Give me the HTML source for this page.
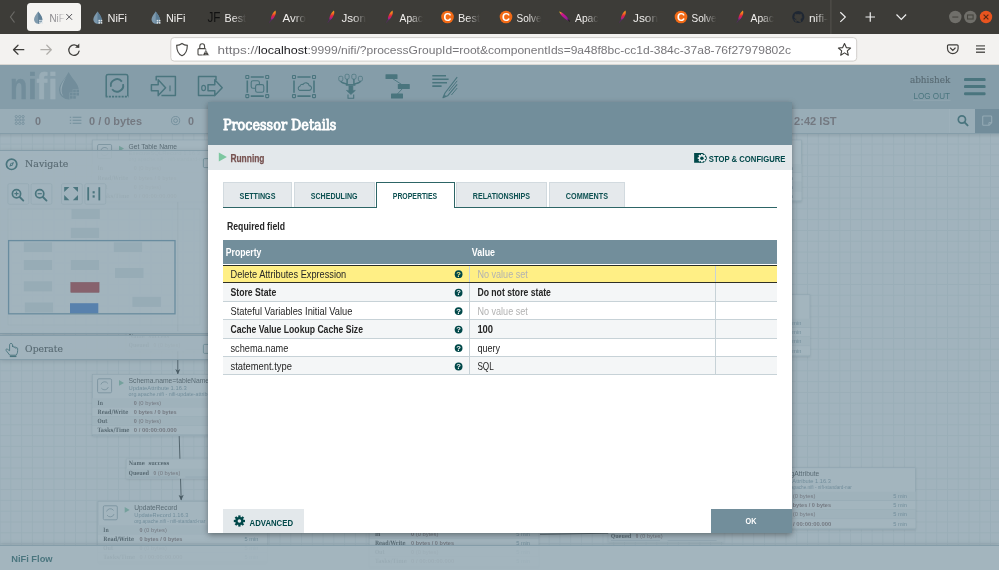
<!DOCTYPE html>
<html lang="en"><head><meta charset="utf-8"><title>NiFi Flow</title>
<style>
*{box-sizing:border-box;margin:0;padding:0}
html,body{width:999px;height:570px;overflow:hidden;background:#a5b7c0;font-family:"Liberation Sans",sans-serif}
#root{position:relative;width:999px;height:570px;overflow:hidden}
svg{position:absolute;left:0;top:0;overflow:visible;will-change:transform}
svg text{font-family:"Liberation Sans",sans-serif;white-space:pre}
svg text.slab{font-family:"DejaVu Serif Condensed","DejaVu Serif","Liberation Serif",serif}
/* Firefox chrome */
#tabbar{position:absolute;left:0;top:0;width:999px;height:34px;background:#3d3c38}
#activetab{position:absolute;left:27px;top:3px;width:54.4px;height:27.6px;border-radius:3.5px;background:#f4f3f1}
#toolbar{position:absolute;left:0;top:34px;width:999px;height:31px;background:#f3f2f0;border-bottom:1px solid #d8d6d2}
#urlbar{position:absolute;left:171px;top:4px;width:685px;height:23px;border-radius:3px;background:#fff}
/* NiFi */
#nifi{position:absolute;left:0;top:0;width:999px;height:570px;overflow:hidden;background:#f9fafb}
#glass{position:absolute;left:0;top:65px;width:999px;height:505px;background:#728e9b;opacity:.65;z-index:5}
#header{position:absolute;left:0;top:65px;width:999px;height:45px;background:#aabbc3}
#flow-status{position:absolute;left:0;top:108.6px;width:999px;height:25.4px;background:#e3e8eb;border-bottom:.8px solid #aabbc3;z-index:2}
#flow-status:after{content:"";position:absolute;left:0;top:25.4px;width:999px;height:4px;background:linear-gradient(rgba(0,0,0,.16),rgba(0,0,0,0))}
#search-btn{position:absolute;left:949.4px;top:0;width:25.4px;height:24.4px;border-left:1.2px solid #eef1f3;background:#e3e8eb}
#bulletin-btn{position:absolute;left:974.8px;top:0;width:24.2px;height:24.4px;background:#728e9b}
#canvas{position:absolute;left:0;top:120px;width:999px;height:427px;background-color:#f9fafb;
 background-image:linear-gradient(to right,#e5ebed .8px,transparent .8px),linear-gradient(to bottom,#e5ebed .8px,transparent .8px);
 background-size:10.77px 10.8px;background-position:-.4px 2px}
.panel{position:absolute;left:0;width:230px;background:rgba(249,250,251,.9);border:.8px solid #aabbc3;border-left:0;box-shadow:0 1px 5px rgba(0,0,0,.25);z-index:3}
#navigate{top:150px;height:183.6px}
#operate{top:335.3px;height:25.2px}
#footer{position:absolute;left:0;top:545.2px;width:999px;height:24.8px;background:rgba(255,255,255,.88);border-top:.8px solid #aabbc3;box-shadow:0 -1px 5px rgba(0,0,0,.2);z-index:3}
#canvas-svg{z-index:1}
#ui-svg{z-index:4}
#chrome-svg,#tabbar,#toolbar{z-index:9}
#dialog{position:absolute;left:208px;top:102.3px;width:584px;height:430.4px;background:#fff;box-shadow:0 2px 6px rgba(0,0,0,.38);z-index:6}
#dlg-svg{z-index:7}
#dlg-header{position:absolute;left:0;top:0;width:584px;height:44px;background:#728e9b}
#dlg-status{position:absolute;left:0;top:43px;width:584px;height:24.6px;background:#e3e8eb}
#tabline{position:absolute;left:15.1px;top:104.6px;width:553.6px;height:1px;background:#2d6566}
.tab{position:absolute;top:79.9px;height:24.8px;background:#e5e9ec;border:.8px solid #d2dadf;border-bottom:0}
.tab.sel{background:#fff;border:1px solid #2d6566;border-bottom:0;height:26px}
#thead{position:absolute;left:15.1px;top:137.6px;width:553.6px;height:24.6px;background:#728e9b}
.row{position:absolute;left:15.1px;width:553.6px;height:18.46px;background:#fff;border-bottom:.9px solid #c7d2d7}
.row.odd{background:#f4f6f7}
.row.selrow{background:#ffef85;border-top:1px solid #2a2d25;border-bottom:.9px solid #2f3026}
.row i{position:absolute;top:0;height:100%;width:.9px;background:#c7d2d7}
.row .c1{left:246px}.row .c2{left:492.2px}
#btn-adv{position:absolute;left:15.3px;top:406.3px;width:81px;height:24.1px;background:#e3e8eb}
#btn-ok{position:absolute;left:503px;top:406.5px;width:81px;height:23.9px;background:#728e9b}

</style></head>
<body>
<div id="root">
<div id="tabbar"><div id="activetab"></div></div>
<div id="toolbar"><div id="urlbar"></div></div>
<svg id="chrome-svg" width="999" height="65" viewBox="0 0 999 65">
<rect x="170.8" y="37.6" width="685.9" height="23.5" rx="3.4" fill="#fff" stroke="#cdcbc7" stroke-width=".9"/>
<path d="M14.5 11.5 L10.5 17 L14.5 22.5" fill="none" stroke="#6b6a66" stroke-width="1.2"/>
<defs><linearGradient id="nf" gradientUnits="userSpaceOnUse" x1="49" y1="0" x2="65" y2="0"><stop offset="0" stop-color="#7c7b7f"/><stop offset=".5" stop-color="#9d9ca0"/><stop offset="1" stop-color="#e8e7e6"/></linearGradient><linearGradient id="fg" x1="0" y1="0" x2="0" y2="1"><stop offset="0" stop-color="#fbb01c"/><stop offset=".28" stop-color="#f2781f"/><stop offset=".55" stop-color="#e2243c"/><stop offset=".85" stop-color="#a6219a"/><stop offset="1" stop-color="#6a2a86"/></linearGradient><linearGradient id="fg2" x1="0" y1="0" x2="1" y2="1"><stop offset="0" stop-color="#f5e000"/><stop offset=".3" stop-color="#d4148c"/><stop offset="1" stop-color="#7a1fa0"/></linearGradient></defs>
<g transform="translate(38.2,17.4) scale(0.95)"><path d="M0 -6.2 C 2.4 -2.6 4.4 -0.4 4.4 2.2 A4.4 4.4 0 0 1 -4.4 2.2 C -4.4 -0.4 -2.4 -2.6 0 -6.2Z" fill="#7f9aad"/><path d="M0 -6.2 C 2.4 -2.6 4.4 -0.4 4.4 2.2 A4.4 4.4 0 0 1 0 6.6Z" fill="#5f7f96"/><rect x="0.6" y="2.2" width="4.6" height="4.6" fill="#f4f3f1" opacity=".0"/><rect x="1.0" y="2.6" width="1.7" height="1.7" fill="#dfe6ea"/><rect x="3.3" y="2.6" width="1.7" height="1.7" fill="#dfe6ea"/><rect x="1.0" y="4.9" width="1.7" height="1.7" fill="#dfe6ea"/><rect x="3.3" y="4.9" width="1.7" height="1.7" fill="#dfe6ea"/></g>
<text x="49.40" y="21.50" font-size="11" fill="url(#nf)" textLength="15.40" lengthAdjust="spacingAndGlyphs">NiF</text>
<path d="M66.3 14 L72.1 19.8 M72.1 14 L66.3 19.8" stroke="#55555a" stroke-width="1" fill="none"/>
<g transform="translate(97.5,17.4) scale(0.95)"><path d="M0 -6.2 C 2.4 -2.6 4.4 -0.4 4.4 2.2 A4.4 4.4 0 0 1 -4.4 2.2 C -4.4 -0.4 -2.4 -2.6 0 -6.2Z" fill="#7d99ad"/><path d="M0 -6.2 C 2.4 -2.6 4.4 -0.4 4.4 2.2 A4.4 4.4 0 0 1 0 6.6Z" fill="#5c7d95"/><rect x="0.6" y="2.2" width="4.6" height="4.6" fill="#f4f3f1" opacity=".0"/><rect x="1.0" y="2.6" width="1.7" height="1.7" fill="#dfe6ea"/><rect x="3.3" y="2.6" width="1.7" height="1.7" fill="#dfe6ea"/><rect x="1.0" y="4.9" width="1.7" height="1.7" fill="#dfe6ea"/><rect x="3.3" y="4.9" width="1.7" height="1.7" fill="#dfe6ea"/></g>
<text x="107.50" y="21.60" font-size="11" fill="#f1efed" textLength="19.50" lengthAdjust="spacingAndGlyphs">NiFi</text>
<g transform="translate(155.7,17.4) scale(0.95)"><path d="M0 -6.2 C 2.4 -2.6 4.4 -0.4 4.4 2.2 A4.4 4.4 0 0 1 -4.4 2.2 C -4.4 -0.4 -2.4 -2.6 0 -6.2Z" fill="#7d99ad"/><path d="M0 -6.2 C 2.4 -2.6 4.4 -0.4 4.4 2.2 A4.4 4.4 0 0 1 0 6.6Z" fill="#5c7d95"/><rect x="0.6" y="2.2" width="4.6" height="4.6" fill="#f4f3f1" opacity=".0"/><rect x="1.0" y="2.6" width="1.7" height="1.7" fill="#dfe6ea"/><rect x="3.3" y="2.6" width="1.7" height="1.7" fill="#dfe6ea"/><rect x="1.0" y="4.9" width="1.7" height="1.7" fill="#dfe6ea"/><rect x="3.3" y="4.9" width="1.7" height="1.7" fill="#dfe6ea"/></g>
<text x="166.00" y="21.60" font-size="11" fill="#f1efed" textLength="19.30" lengthAdjust="spacingAndGlyphs">NiFi</text>
<text x="207.40" y="22.40" font-size="13.8" fill="#111" textLength="13.00" lengthAdjust="spacingAndGlyphs">JF</text>
<text x="224.50" y="21.60" font-size="11" fill="#f1efed" textLength="21.50" lengthAdjust="spacingAndGlyphs">Best</text>
<g transform="translate(272.5,17)"><defs></defs><path d="M2.9 -6.6 C 4.4 -3.6 1.6 1.2 -1.2 3.4 C -2.6 0.4 0.2 -4.6 2.9 -6.6Z" fill="url(#fg)"/><path d="M-0.6 1.6 L-3.1 5.6" stroke="#5a2a6a" stroke-width=".7" fill="none"/></g>
<text x="282.50" y="21.60" font-size="11" fill="#f1efed" textLength="23.50" lengthAdjust="spacingAndGlyphs">Avro</text>
<g transform="translate(331,17)"><defs></defs><path d="M2.9 -6.6 C 4.4 -3.6 1.6 1.2 -1.2 3.4 C -2.6 0.4 0.2 -4.6 2.9 -6.6Z" fill="url(#fg)"/><path d="M-0.6 1.6 L-3.1 5.6" stroke="#5a2a6a" stroke-width=".7" fill="none"/></g>
<text x="341.50" y="21.60" font-size="11" fill="#f1efed" textLength="24.50" lengthAdjust="spacingAndGlyphs">Json</text>
<g transform="translate(389.5,17)"><defs></defs><path d="M2.9 -6.6 C 4.4 -3.6 1.6 1.2 -1.2 3.4 C -2.6 0.4 0.2 -4.6 2.9 -6.6Z" fill="url(#fg)"/><path d="M-0.6 1.6 L-3.1 5.6" stroke="#5a2a6a" stroke-width=".7" fill="none"/></g>
<text x="399.50" y="21.60" font-size="11" fill="#f1efed" textLength="23.50" lengthAdjust="spacingAndGlyphs">Apac</text>
<circle cx="447.5" cy="17" r="6.3" fill="#f26a16"/><text x="447.5" y="20.9" font-size="11" font-weight="700" fill="#fff" text-anchor="middle">C</text>
<text x="458.00" y="21.60" font-size="11" fill="#f1efed" textLength="22.00" lengthAdjust="spacingAndGlyphs">Best</text>
<circle cx="506" cy="17" r="6.3" fill="#f26a16"/><text x="506" y="20.9" font-size="11" font-weight="700" fill="#fff" text-anchor="middle">C</text>
<text x="516.50" y="21.60" font-size="11" fill="#f1efed" textLength="25.00" lengthAdjust="spacingAndGlyphs">Solve</text>
<path d="M559.2 11.4 C563 12.4 567.6 16.6 569.4 20.6 C566.6 20.6 560.8 16 559.2 11.4Z" fill="url(#fg2)"/><path d="M567.6 19.2 L569.9 21.4" stroke="#17120f" stroke-width="1"/>
<text x="575.00" y="21.60" font-size="11" fill="#f1efed" textLength="23.50" lengthAdjust="spacingAndGlyphs">Apac</text>
<g transform="translate(622.5,17)"><defs></defs><path d="M2.9 -6.6 C 4.4 -3.6 1.6 1.2 -1.2 3.4 C -2.6 0.4 0.2 -4.6 2.9 -6.6Z" fill="url(#fg)"/><path d="M-0.6 1.6 L-3.1 5.6" stroke="#5a2a6a" stroke-width=".7" fill="none"/></g>
<text x="633.00" y="21.60" font-size="11" fill="#f1efed" textLength="25.00" lengthAdjust="spacingAndGlyphs">Json</text>
<circle cx="681" cy="17" r="6.3" fill="#f26a16"/><text x="681" y="20.9" font-size="11" font-weight="700" fill="#fff" text-anchor="middle">C</text>
<text x="691.50" y="21.60" font-size="11" fill="#f1efed" textLength="25.00" lengthAdjust="spacingAndGlyphs">Solve</text>
<g transform="translate(740,17)"><defs></defs><path d="M2.9 -6.6 C 4.4 -3.6 1.6 1.2 -1.2 3.4 C -2.6 0.4 0.2 -4.6 2.9 -6.6Z" fill="url(#fg)"/><path d="M-0.6 1.6 L-3.1 5.6" stroke="#5a2a6a" stroke-width=".7" fill="none"/></g>
<text x="750.50" y="21.60" font-size="11" fill="#f1efed" textLength="23.50" lengthAdjust="spacingAndGlyphs">Apac</text>
<g transform="translate(798.3,17)"><circle r="6.1" fill="#1f2733"/><path d="M-2.2 5.2 V3.2 C-3.8 3.6 -4.2 2.4 -4.6 2.0 M-2.2 3.4 C-2.2 2.4 -1.6 2.0 -1.6 2.0 C-3.6 1.6 -4 0.2 -3.2 -1.2 C-3.4 -2.2 -3 -2.8 -3 -2.8 C-2 -2.8 -1.4 -2.2 -1.4 -2.2 C-0.4 -2.5 0.4 -2.5 1.4 -2.2 C1.4 -2.2 2 -2.8 3 -2.8 C3 -2.8 3.4 -2.2 3.2 -1.2 C4 0.2 3.6 1.6 1.6 2.0 C1.6 2.0 2.2 2.4 2.2 3.4 V5.2" fill="#3d3c38" stroke="#3d3c38" stroke-width=".8"/></g>
<text x="809.00" y="21.60" font-size="11" fill="#f1efed" textLength="19.00" lengthAdjust="spacingAndGlyphs">nifi-</text>
<rect x="233" y="10" width="14" height="15" fill="url(#tf)"/>
<rect x="293" y="10" width="14" height="15" fill="url(#tf)"/>
<rect x="353" y="10" width="14" height="15" fill="url(#tf)"/>
<rect x="410" y="10" width="14" height="15" fill="url(#tf)"/>
<rect x="467" y="10" width="14" height="15" fill="url(#tf)"/>
<rect x="528.5" y="10" width="14" height="15" fill="url(#tf)"/>
<rect x="585.5" y="10" width="14" height="15" fill="url(#tf)"/>
<rect x="645" y="10" width="14" height="15" fill="url(#tf)"/>
<rect x="703.5" y="10" width="14" height="15" fill="url(#tf)"/>
<rect x="761" y="10" width="14" height="15" fill="url(#tf)"/>
<rect x="815" y="10" width="14" height="15" fill="url(#tf)"/>
<defs><linearGradient id="tf" x1="0" y1="0" x2="1" y2="0"><stop offset="0" stop-color="#3d3c38" stop-opacity="0"/><stop offset=".85" stop-color="#3d3c38" stop-opacity=".93"/><stop offset="1" stop-color="#3d3c38" stop-opacity=".96"/></linearGradient></defs>
<rect x="830.4" y="0" width="1" height="34" fill="#55544f"/>
<path d="M840.3 12.3 L845.3 17.1 L840.3 21.9" fill="none" stroke="#f0f0f0" stroke-width="1.2"/>
<path d="M865.5 17 H875 M870.25 12.2 V21.8" fill="none" stroke="#f0f0f0" stroke-width="1.2"/>
<path d="M896.5 14.5 L901.3 19.3 L906.1 14.5" fill="none" stroke="#f0f0f0" stroke-width="1.2"/>
<circle cx="955.3" cy="17" r="6.2" fill="#706f6a"/><rect x="952.3" y="16.5" width="6" height="1.1" fill="#46453f"/>
<circle cx="970.3" cy="17" r="6.2" fill="#706f6a"/><rect x="967.5" y="15" width="5.6" height="4" fill="none" stroke="#46453f" stroke-width="1.1"/>
<circle cx="986" cy="17" r="6.2" fill="#e8541f"/><path d="M983.6 14.6 L988.4 19.4 M988.4 14.6 L983.6 19.4" stroke="#5a2a14" stroke-width="1.2"/>
<path d="M23.8 49.7 H13.8 M18 45.2 L13.5 49.7 L18 54.2" fill="none" stroke="#3f3e3b" stroke-width="1.25" stroke-linecap="round" stroke-linejoin="round"/>
<path d="M40.9 49.7 H51 M46.8 45.2 L51.3 49.7 L46.8 54.2" fill="none" stroke="#b0aeaa" stroke-width="1.25" stroke-linecap="round" stroke-linejoin="round"/>
<path d="M78.3 47.2 A5.2 5.2 0 1 0 79.1 51.2" fill="none" stroke="#3f3e3b" stroke-width="1.25" stroke-linecap="round"/><path d="M79.3 43.6 V47.8 H75.1Z" fill="#3f3e3b"/>
<path d="M182 43.5 C184 45 185.5 45.3 187.3 45.4 C187.3 50.5 185.6 54 182 55.7 C178.4 54 176.7 50.5 176.7 45.4 C178.5 45.3 180 45 182 43.5Z" fill="none" stroke="#4a4946" stroke-width="1.15"/>
<rect x="198" y="48.6" width="7.8" height="6.4" rx="1" fill="none" stroke="#4a4946" stroke-width="1.1"/><path d="M199.8 48.6 V46.4 A2.4 2.6 0 0 1 204.6 46.4 V48.6" fill="none" stroke="#4a4946" stroke-width="1.1"/><path d="M205.9 49.4 L209.4 55.4 H202.4Z" fill="#3d3c39" stroke="#fff" stroke-width=".6" stroke-linejoin="round"/><path d="M205.9 51.4 V53.3 M205.9 54 V54.6" stroke="#fff" stroke-width=".7"/>
<text y="53.6" font-size="11.8" fill="#77767a"><tspan x="217.6" textLength="40.4" lengthAdjust="spacingAndGlyphs">https://</tspan><tspan x="258" textLength="49.5" lengthAdjust="spacingAndGlyphs" fill="#1b1b1f">localhost</tspan><tspan x="307.5" textLength="483.5" lengthAdjust="spacingAndGlyphs">:9999/nifi/?processGroupId=root&amp;componentIds=9a48f8bc-cc1d-384c-37a8-76f27979802c</tspan></text>
<path d="M844.5 43.6 L846.3 47.6 L850.6 48 L847.3 50.9 L848.3 55.2 L844.5 52.9 L840.7 55.2 L841.7 50.9 L838.4 48 L842.7 47.6Z" fill="none" stroke="#3f3e3b" stroke-width="1.1" stroke-linejoin="round"/>
<path d="M948.6 44.9 H957 A1.1 1.1 0 0 1 958.1 46 V48.6 A5.3 5.1 0 0 1 947.5 48.6 V46 A1.1 1.1 0 0 1 948.6 44.9Z" fill="none" stroke="#3f3e3b" stroke-width="1.15"/><path d="M950.4 48 L952.8 50.4 L955.2 48" fill="none" stroke="#3f3e3b" stroke-width="1.15" stroke-linecap="round"/>
<path d="M976 45.9 H985 M976 49 H985 M976 52.2 H985" stroke="#5a5956" stroke-width="1.35"/>
</svg>

<div id="nifi">
<div id="header"></div>
<div id="flow-status"><div id="search-btn"></div><div id="bulletin-btn"></div></div>
<div id="canvas"></div>
<svg id="canvas-svg" width="999" height="570" viewBox="0 0 999 570">
<defs><filter id="psh" x="-5%" y="-10%" width="110%" height="125%"><feDropShadow dx="0" dy=".6" stdDeviation=".9" flood-color="#000" flood-opacity=".22"/></filter></defs>
<path d="M177.8 201.6 V374" stroke="#000" stroke-width=".9" fill="none"/><path d="M175.3 369 L177.8 374.6 L180.3 369 L177.8 370.4Z" fill="#000"/>
<path d="M179.2 435.8 L181.2 500" stroke="#000" stroke-width=".9" fill="none"/><path d="M178.6 495 L181.2 500.6 L183.7 494.8 L181.2 496.2Z" fill="#000"/>
<path d="M540 534.3 L609 533.2" stroke="#000" stroke-width=".8" fill="none"/>
<g transform="translate(126.30,331.60)"><rect x="0" y="0" width="115.2" height="19.4" fill="#fff" stroke="#d6dde1" stroke-width=".5" filter="url(#psh)"/><rect x="0" y="9.6" width="115.2" height="9.8" fill="#f4f6f7"/><rect x="2.4" y="17.6" width="49" height=".9" fill="#d0d9de"/><rect x="59" y="17.6" width="49" height=".9" fill="#d0d9de"/><text x="2.50" y="6.40" font-size="5.8" fill="#262626" font-weight="700" class="slab" textLength="16.00" lengthAdjust="spacingAndGlyphs">Name</text>
<text x="22.20" y="6.40" font-size="5.8" fill="#262626" font-weight="700" class="slab" textLength="20.80" lengthAdjust="spacingAndGlyphs">success</text>
<text x="2.50" y="15.60" font-size="5.8" fill="#262626" font-weight="700" class="slab" textLength="20.20" lengthAdjust="spacingAndGlyphs">Queued</text>
<text x="27.10" y="15.60" font-size="6.0" fill="#775351" font-weight="700" textLength="2.50" lengthAdjust="spacingAndGlyphs">0</text>
<text x="31.50" y="15.60" font-size="6.0" fill="#775351" textLength="22.60" lengthAdjust="spacingAndGlyphs">(0 bytes)</text>
</g>
<g transform="translate(126.30,459.00)"><rect x="0" y="0" width="115.2" height="19.4" fill="#fff" stroke="#d6dde1" stroke-width=".5" filter="url(#psh)"/><rect x="0" y="9.6" width="115.2" height="9.8" fill="#f4f6f7"/><rect x="2.4" y="17.6" width="49" height=".9" fill="#d0d9de"/><rect x="59" y="17.6" width="49" height=".9" fill="#d0d9de"/><text x="2.50" y="6.40" font-size="5.8" fill="#262626" font-weight="700" class="slab" textLength="16.00" lengthAdjust="spacingAndGlyphs">Name</text>
<text x="22.20" y="6.40" font-size="5.8" fill="#262626" font-weight="700" class="slab" textLength="20.80" lengthAdjust="spacingAndGlyphs">success</text>
<text x="2.50" y="15.60" font-size="5.8" fill="#262626" font-weight="700" class="slab" textLength="20.20" lengthAdjust="spacingAndGlyphs">Queued</text>
<text x="27.10" y="15.60" font-size="6.0" fill="#775351" font-weight="700" textLength="2.50" lengthAdjust="spacingAndGlyphs">0</text>
<text x="31.50" y="15.60" font-size="6.0" fill="#775351" textLength="22.60" lengthAdjust="spacingAndGlyphs">(0 bytes)</text>
</g>
<g transform="translate(608.60,522.40)"><rect x="0" y="0" width="115.2" height="19.4" fill="#fff" stroke="#d6dde1" stroke-width=".5" filter="url(#psh)"/><rect x="0" y="9.6" width="115.2" height="9.8" fill="#f4f6f7"/><rect x="2.4" y="17.6" width="49" height=".9" fill="#d0d9de"/><rect x="59" y="17.6" width="49" height=".9" fill="#d0d9de"/><text x="2.50" y="6.40" font-size="5.8" fill="#262626" font-weight="700" class="slab" textLength="16.00" lengthAdjust="spacingAndGlyphs">Name</text>
<text x="22.20" y="6.40" font-size="5.8" fill="#262626" font-weight="700" class="slab" textLength="20.80" lengthAdjust="spacingAndGlyphs">success</text>
<text x="2.50" y="15.60" font-size="5.8" fill="#262626" font-weight="700" class="slab" textLength="20.20" lengthAdjust="spacingAndGlyphs">Queued</text>
<text x="27.10" y="15.60" font-size="6.0" fill="#775351" font-weight="700" textLength="2.50" lengthAdjust="spacingAndGlyphs">0</text>
<text x="31.50" y="15.60" font-size="6.0" fill="#775351" textLength="22.60" lengthAdjust="spacingAndGlyphs">(0 bytes)</text>
</g>
<g transform="translate(92.30,140.00)">
<rect x="0" y="0" width="168.96" height="61.44" fill="#fff" stroke="#c2cdd3" stroke-width=".6" filter="url(#psh)"/>
<rect x="5.3" y="4.5" width="14" height="14" rx="1.3" fill="none" stroke="#8c9ea7" stroke-width=".9"/><path d="M8.6 10.2 A3.9 3.9 0 0 1 15.6 9.2 M16 12.8 A3.9 3.9 0 0 1 9 13.8" fill="none" stroke="#8c9ea7" stroke-width=".9"/>
<path d="M26.7 5.8 L31.7 8.6 L26.7 11.4Z" fill="#7dc7a0"/>
<text x="36.30" y="8.70" font-size="7.1" fill="#262626" textLength="48.50" lengthAdjust="spacingAndGlyphs">Get Table Name</text>
<text x="36.30" y="15.30" font-size="6.0" fill="#728e9b">ExecuteSQLRecord 1.16.3</text>
<text x="36.30" y="21.30" font-size="5.3" fill="#728e9b">org.apache.nifi - nifi-standard-nar</text>
<rect x="0" y="23.90" width="168.96" height="9.12" fill="#f4f6f7"/><rect x="0" y="32.70" width="168.96" height=".5" fill="#c7d2d7"/>
<text x="5.30" y="30.40" font-size="5.9" fill="#262626" font-weight="700" class="slab" textLength="5.40" lengthAdjust="spacingAndGlyphs">In</text>
<text x="41.50" y="30.40" font-size="6.0" fill="#775351" font-weight="700" textLength="3.00" lengthAdjust="spacingAndGlyphs">0</text>
<text x="46.10" y="30.40" font-size="6.0" fill="#775351" textLength="22.80" lengthAdjust="spacingAndGlyphs">(0 bytes)</text>
<text x="146.60" y="30.40" font-size="5.8" fill="#728e9b" textLength="13.80" lengthAdjust="spacingAndGlyphs">5 min</text>
<rect x="0" y="33.05" width="168.96" height="9.12" fill="#ffffff"/><rect x="0" y="41.85" width="168.96" height=".5" fill="#c7d2d7"/>
<text x="5.30" y="39.55" font-size="5.9" fill="#262626" font-weight="700" class="slab" textLength="30.80" lengthAdjust="spacingAndGlyphs">Read/Write</text>
<text x="41.50" y="39.55" font-size="6.0" fill="#775351" font-weight="700" textLength="42.90" lengthAdjust="spacingAndGlyphs">0 bytes / 0 bytes</text>
<text x="146.60" y="39.55" font-size="5.8" fill="#728e9b" textLength="13.80" lengthAdjust="spacingAndGlyphs">5 min</text>
<rect x="0" y="42.20" width="168.96" height="9.12" fill="#f4f6f7"/><rect x="0" y="51.00" width="168.96" height=".5" fill="#c7d2d7"/>
<text x="5.30" y="48.70" font-size="5.9" fill="#262626" font-weight="700" class="slab" textLength="9.90" lengthAdjust="spacingAndGlyphs">Out</text>
<text x="41.50" y="48.70" font-size="6.0" fill="#775351" font-weight="700" textLength="3.00" lengthAdjust="spacingAndGlyphs">0</text>
<text x="46.10" y="48.70" font-size="6.0" fill="#775351" textLength="22.80" lengthAdjust="spacingAndGlyphs">(0 bytes)</text>
<text x="146.60" y="48.70" font-size="5.8" fill="#728e9b" textLength="13.80" lengthAdjust="spacingAndGlyphs">5 min</text>
<rect x="0" y="51.35" width="168.96" height="9.12" fill="#ffffff"/><rect x="0" y="60.15" width="168.96" height=".5" fill="#c7d2d7"/>
<text x="5.30" y="57.85" font-size="5.9" fill="#262626" font-weight="700" class="slab" textLength="32.00" lengthAdjust="spacingAndGlyphs">Tasks/Time</text>
<text x="41.50" y="57.85" font-size="6.0" fill="#775351" font-weight="700" textLength="43.10" lengthAdjust="spacingAndGlyphs">0 / 00:00:00.000</text>
<text x="146.60" y="57.85" font-size="5.8" fill="#728e9b" textLength="13.80" lengthAdjust="spacingAndGlyphs">5 min</text>
</g>
<g transform="translate(632.60,140.00)">
<rect x="0" y="0" width="168.96" height="61.44" fill="#fff" stroke="#c2cdd3" stroke-width=".6" filter="url(#psh)"/>
<rect x="5.3" y="4.5" width="14" height="14" rx="1.3" fill="none" stroke="#8c9ea7" stroke-width=".9"/><path d="M8.6 10.2 A3.9 3.9 0 0 1 15.6 9.2 M16 12.8 A3.9 3.9 0 0 1 9 13.8" fill="none" stroke="#8c9ea7" stroke-width=".9"/>
<path d="M26.7 5.8 L31.7 8.6 L26.7 11.4Z" fill="#7dc7a0"/>
<text x="36.30" y="8.70" font-size="7.1" fill="#262626">ExecuteSQLRecord</text>
<text x="36.30" y="15.30" font-size="6.0" fill="#728e9b">ExecuteSQLRecord 1.16.3</text>
<text x="36.30" y="21.30" font-size="5.3" fill="#728e9b">org.apache.nifi - nifi-standard-nar</text>
<rect x="0" y="23.90" width="168.96" height="9.12" fill="#f4f6f7"/><rect x="0" y="32.70" width="168.96" height=".5" fill="#c7d2d7"/>
<text x="5.30" y="30.40" font-size="5.9" fill="#262626" font-weight="700" class="slab" textLength="5.40" lengthAdjust="spacingAndGlyphs">In</text>
<text x="41.50" y="30.40" font-size="6.0" fill="#775351" font-weight="700" textLength="3.00" lengthAdjust="spacingAndGlyphs">0</text>
<text x="46.10" y="30.40" font-size="6.0" fill="#775351" textLength="22.80" lengthAdjust="spacingAndGlyphs">(0 bytes)</text>
<text x="146.60" y="30.40" font-size="5.8" fill="#728e9b" textLength="13.80" lengthAdjust="spacingAndGlyphs">5 min</text>
<rect x="0" y="33.05" width="168.96" height="9.12" fill="#ffffff"/><rect x="0" y="41.85" width="168.96" height=".5" fill="#c7d2d7"/>
<text x="5.30" y="39.55" font-size="5.9" fill="#262626" font-weight="700" class="slab" textLength="30.80" lengthAdjust="spacingAndGlyphs">Read/Write</text>
<text x="41.50" y="39.55" font-size="6.0" fill="#775351" font-weight="700" textLength="42.90" lengthAdjust="spacingAndGlyphs">0 bytes / 0 bytes</text>
<text x="146.60" y="39.55" font-size="5.8" fill="#728e9b" textLength="13.80" lengthAdjust="spacingAndGlyphs">5 min</text>
<rect x="0" y="42.20" width="168.96" height="9.12" fill="#f4f6f7"/><rect x="0" y="51.00" width="168.96" height=".5" fill="#c7d2d7"/>
<text x="5.30" y="48.70" font-size="5.9" fill="#262626" font-weight="700" class="slab" textLength="9.90" lengthAdjust="spacingAndGlyphs">Out</text>
<text x="41.50" y="48.70" font-size="6.0" fill="#775351" font-weight="700" textLength="3.00" lengthAdjust="spacingAndGlyphs">0</text>
<text x="46.10" y="48.70" font-size="6.0" fill="#775351" textLength="22.80" lengthAdjust="spacingAndGlyphs">(0 bytes)</text>
<text x="146.60" y="48.70" font-size="5.8" fill="#728e9b" textLength="13.80" lengthAdjust="spacingAndGlyphs">5 min</text>
<rect x="0" y="51.35" width="168.96" height="9.12" fill="#ffffff"/><rect x="0" y="60.15" width="168.96" height=".5" fill="#c7d2d7"/>
<text x="5.30" y="57.85" font-size="5.9" fill="#262626" font-weight="700" class="slab" textLength="32.00" lengthAdjust="spacingAndGlyphs">Tasks/Time</text>
<text x="41.50" y="57.85" font-size="6.0" fill="#775351" font-weight="700" textLength="43.10" lengthAdjust="spacingAndGlyphs">0 / 00:00:00.000</text>
<text x="146.60" y="57.85" font-size="5.8" fill="#728e9b" textLength="13.80" lengthAdjust="spacingAndGlyphs">5 min</text>
</g>
<g transform="translate(641.00,294.80)">
<rect x="0" y="0" width="168.96" height="61.44" fill="#fff" stroke="#c2cdd3" stroke-width=".6" filter="url(#psh)"/>
<rect x="5.3" y="4.5" width="14" height="14" rx="1.3" fill="none" stroke="#8c9ea7" stroke-width=".9"/><path d="M8.6 10.2 A3.9 3.9 0 0 1 15.6 9.2 M16 12.8 A3.9 3.9 0 0 1 9 13.8" fill="none" stroke="#8c9ea7" stroke-width=".9"/>
<path d="M26.7 5.8 L31.7 8.6 L26.7 11.4Z" fill="#7dc7a0"/>
<text x="36.30" y="8.70" font-size="7.1" fill="#262626">PutDatabaseRecord</text>
<text x="36.30" y="15.30" font-size="6.0" fill="#728e9b">PutDatabaseRecord 1.16.3</text>
<text x="36.30" y="21.30" font-size="5.3" fill="#728e9b">org.apache.nifi - nifi-standard-nar</text>
<rect x="0" y="23.90" width="168.96" height="9.12" fill="#f4f6f7"/><rect x="0" y="32.70" width="168.96" height=".5" fill="#c7d2d7"/>
<text x="5.30" y="30.40" font-size="5.9" fill="#262626" font-weight="700" class="slab" textLength="5.40" lengthAdjust="spacingAndGlyphs">In</text>
<text x="41.50" y="30.40" font-size="6.0" fill="#775351" font-weight="700" textLength="3.00" lengthAdjust="spacingAndGlyphs">0</text>
<text x="46.10" y="30.40" font-size="6.0" fill="#775351" textLength="22.80" lengthAdjust="spacingAndGlyphs">(0 bytes)</text>
<text x="146.60" y="30.40" font-size="5.8" fill="#728e9b" textLength="13.80" lengthAdjust="spacingAndGlyphs">5 min</text>
<rect x="0" y="33.05" width="168.96" height="9.12" fill="#ffffff"/><rect x="0" y="41.85" width="168.96" height=".5" fill="#c7d2d7"/>
<text x="5.30" y="39.55" font-size="5.9" fill="#262626" font-weight="700" class="slab" textLength="30.80" lengthAdjust="spacingAndGlyphs">Read/Write</text>
<text x="41.50" y="39.55" font-size="6.0" fill="#775351" font-weight="700" textLength="42.90" lengthAdjust="spacingAndGlyphs">0 bytes / 0 bytes</text>
<text x="146.60" y="39.55" font-size="5.8" fill="#728e9b" textLength="13.80" lengthAdjust="spacingAndGlyphs">5 min</text>
<rect x="0" y="42.20" width="168.96" height="9.12" fill="#f4f6f7"/><rect x="0" y="51.00" width="168.96" height=".5" fill="#c7d2d7"/>
<text x="5.30" y="48.70" font-size="5.9" fill="#262626" font-weight="700" class="slab" textLength="9.90" lengthAdjust="spacingAndGlyphs">Out</text>
<text x="41.50" y="48.70" font-size="6.0" fill="#775351" font-weight="700" textLength="3.00" lengthAdjust="spacingAndGlyphs">0</text>
<text x="46.10" y="48.70" font-size="6.0" fill="#775351" textLength="22.80" lengthAdjust="spacingAndGlyphs">(0 bytes)</text>
<text x="146.60" y="48.70" font-size="5.8" fill="#728e9b" textLength="13.80" lengthAdjust="spacingAndGlyphs">5 min</text>
<rect x="0" y="51.35" width="168.96" height="9.12" fill="#ffffff"/><rect x="0" y="60.15" width="168.96" height=".5" fill="#c7d2d7"/>
<text x="5.30" y="57.85" font-size="5.9" fill="#262626" font-weight="700" class="slab" textLength="32.00" lengthAdjust="spacingAndGlyphs">Tasks/Time</text>
<text x="41.50" y="57.85" font-size="6.0" fill="#775351" font-weight="700" textLength="43.10" lengthAdjust="spacingAndGlyphs">0 / 00:00:00.000</text>
<text x="146.60" y="57.85" font-size="5.8" fill="#728e9b" textLength="13.80" lengthAdjust="spacingAndGlyphs">5 min</text>
</g>
<g transform="translate(92.30,374.30)">
<rect x="0" y="0" width="168.96" height="61.44" fill="#fff" stroke="#c2cdd3" stroke-width=".6" filter="url(#psh)"/>
<rect x="5.3" y="4.5" width="14" height="14" rx="1.3" fill="none" stroke="#8c9ea7" stroke-width=".9"/><path d="M8.6 10.2 A3.9 3.9 0 0 1 15.6 9.2 M16 12.8 A3.9 3.9 0 0 1 9 13.8" fill="none" stroke="#8c9ea7" stroke-width=".9"/>
<path d="M26.7 5.8 L31.7 8.6 L26.7 11.4Z" fill="#7dc7a0"/>
<text x="36.30" y="8.70" font-size="7.1" fill="#262626" textLength="80.50" lengthAdjust="spacingAndGlyphs">Schema.name=tableName</text>
<text x="36.30" y="15.30" font-size="6.0" fill="#728e9b" textLength="58.20" lengthAdjust="spacingAndGlyphs">UpdateAttribute 1.16.3</text>
<text x="36.30" y="21.30" font-size="5.3" fill="#728e9b" textLength="96.00" lengthAdjust="spacingAndGlyphs">org.apache.nifi - nifi-update-attribute-nar</text>
<rect x="0" y="23.90" width="168.96" height="9.12" fill="#f4f6f7"/><rect x="0" y="32.70" width="168.96" height=".5" fill="#c7d2d7"/>
<text x="5.30" y="30.40" font-size="5.9" fill="#262626" font-weight="700" class="slab" textLength="5.40" lengthAdjust="spacingAndGlyphs">In</text>
<text x="41.50" y="30.40" font-size="6.0" fill="#775351" font-weight="700" textLength="3.00" lengthAdjust="spacingAndGlyphs">0</text>
<text x="46.10" y="30.40" font-size="6.0" fill="#775351" textLength="22.80" lengthAdjust="spacingAndGlyphs">(0 bytes)</text>
<text x="146.60" y="30.40" font-size="5.8" fill="#728e9b" textLength="13.80" lengthAdjust="spacingAndGlyphs">5 min</text>
<rect x="0" y="33.05" width="168.96" height="9.12" fill="#ffffff"/><rect x="0" y="41.85" width="168.96" height=".5" fill="#c7d2d7"/>
<text x="5.30" y="39.55" font-size="5.9" fill="#262626" font-weight="700" class="slab" textLength="30.80" lengthAdjust="spacingAndGlyphs">Read/Write</text>
<text x="41.50" y="39.55" font-size="6.0" fill="#775351" font-weight="700" textLength="42.90" lengthAdjust="spacingAndGlyphs">0 bytes / 0 bytes</text>
<text x="146.60" y="39.55" font-size="5.8" fill="#728e9b" textLength="13.80" lengthAdjust="spacingAndGlyphs">5 min</text>
<rect x="0" y="42.20" width="168.96" height="9.12" fill="#f4f6f7"/><rect x="0" y="51.00" width="168.96" height=".5" fill="#c7d2d7"/>
<text x="5.30" y="48.70" font-size="5.9" fill="#262626" font-weight="700" class="slab" textLength="9.90" lengthAdjust="spacingAndGlyphs">Out</text>
<text x="41.50" y="48.70" font-size="6.0" fill="#775351" font-weight="700" textLength="3.00" lengthAdjust="spacingAndGlyphs">0</text>
<text x="46.10" y="48.70" font-size="6.0" fill="#775351" textLength="22.80" lengthAdjust="spacingAndGlyphs">(0 bytes)</text>
<text x="146.60" y="48.70" font-size="5.8" fill="#728e9b" textLength="13.80" lengthAdjust="spacingAndGlyphs">5 min</text>
<rect x="0" y="51.35" width="168.96" height="9.12" fill="#ffffff"/><rect x="0" y="60.15" width="168.96" height=".5" fill="#c7d2d7"/>
<text x="5.30" y="57.85" font-size="5.9" fill="#262626" font-weight="700" class="slab" textLength="32.00" lengthAdjust="spacingAndGlyphs">Tasks/Time</text>
<text x="41.50" y="57.85" font-size="6.0" fill="#775351" font-weight="700" textLength="43.10" lengthAdjust="spacingAndGlyphs">0 / 00:00:00.000</text>
<text x="146.60" y="57.85" font-size="5.8" fill="#728e9b" textLength="13.80" lengthAdjust="spacingAndGlyphs">5 min</text>
</g>
<g transform="translate(98.00,501.30)">
<rect x="0" y="0" width="168.96" height="61.44" fill="#fff" stroke="#c2cdd3" stroke-width=".6" filter="url(#psh)"/>
<rect x="5.3" y="4.5" width="14" height="14" rx="1.3" fill="none" stroke="#8c9ea7" stroke-width=".9"/><path d="M8.6 10.2 A3.9 3.9 0 0 1 15.6 9.2 M16 12.8 A3.9 3.9 0 0 1 9 13.8" fill="none" stroke="#8c9ea7" stroke-width=".9"/>
<path d="M26.7 5.8 L31.7 8.6 L26.7 11.4Z" fill="#7dc7a0"/>
<text x="36.30" y="8.70" font-size="7.1" fill="#262626" textLength="43.00" lengthAdjust="spacingAndGlyphs">UpdateRecord</text>
<text x="36.30" y="15.30" font-size="6.0" fill="#728e9b" textLength="54.00" lengthAdjust="spacingAndGlyphs">UpdateRecord 1.16.3</text>
<text x="36.30" y="21.30" font-size="5.3" fill="#728e9b" textLength="71.00" lengthAdjust="spacingAndGlyphs">org.apache.nifi - nifi-standard-nar</text>
<rect x="0" y="23.90" width="168.96" height="9.12" fill="#f4f6f7"/><rect x="0" y="32.70" width="168.96" height=".5" fill="#c7d2d7"/>
<text x="5.30" y="30.40" font-size="5.9" fill="#262626" font-weight="700" class="slab" textLength="5.40" lengthAdjust="spacingAndGlyphs">In</text>
<text x="41.50" y="30.40" font-size="6.0" fill="#775351" font-weight="700" textLength="3.00" lengthAdjust="spacingAndGlyphs">0</text>
<text x="46.10" y="30.40" font-size="6.0" fill="#775351" textLength="22.80" lengthAdjust="spacingAndGlyphs">(0 bytes)</text>
<text x="146.60" y="30.40" font-size="5.8" fill="#728e9b" textLength="13.80" lengthAdjust="spacingAndGlyphs">5 min</text>
<rect x="0" y="33.05" width="168.96" height="9.12" fill="#ffffff"/><rect x="0" y="41.85" width="168.96" height=".5" fill="#c7d2d7"/>
<text x="5.30" y="39.55" font-size="5.9" fill="#262626" font-weight="700" class="slab" textLength="30.80" lengthAdjust="spacingAndGlyphs">Read/Write</text>
<text x="41.50" y="39.55" font-size="6.0" fill="#775351" font-weight="700" textLength="42.90" lengthAdjust="spacingAndGlyphs">0 bytes / 0 bytes</text>
<text x="146.60" y="39.55" font-size="5.8" fill="#728e9b" textLength="13.80" lengthAdjust="spacingAndGlyphs">5 min</text>
<rect x="0" y="42.20" width="168.96" height="9.12" fill="#f4f6f7"/><rect x="0" y="51.00" width="168.96" height=".5" fill="#c7d2d7"/>
<text x="5.30" y="48.70" font-size="5.9" fill="#262626" font-weight="700" class="slab" textLength="9.90" lengthAdjust="spacingAndGlyphs">Out</text>
<text x="41.50" y="48.70" font-size="6.0" fill="#775351" font-weight="700" textLength="3.00" lengthAdjust="spacingAndGlyphs">0</text>
<text x="46.10" y="48.70" font-size="6.0" fill="#775351" textLength="22.80" lengthAdjust="spacingAndGlyphs">(0 bytes)</text>
<text x="146.60" y="48.70" font-size="5.8" fill="#728e9b" textLength="13.80" lengthAdjust="spacingAndGlyphs">5 min</text>
<rect x="0" y="51.35" width="168.96" height="9.12" fill="#ffffff"/><rect x="0" y="60.15" width="168.96" height=".5" fill="#c7d2d7"/>
<text x="5.30" y="57.85" font-size="5.9" fill="#262626" font-weight="700" class="slab" textLength="32.00" lengthAdjust="spacingAndGlyphs">Tasks/Time</text>
<text x="41.50" y="57.85" font-size="6.0" fill="#775351" font-weight="700" textLength="43.10" lengthAdjust="spacingAndGlyphs">0 / 00:00:00.000</text>
<text x="146.60" y="57.85" font-size="5.8" fill="#728e9b" textLength="13.80" lengthAdjust="spacingAndGlyphs">5 min</text>
</g>
<g transform="translate(369.60,505.60)">
<rect x="0" y="0" width="168.96" height="61.44" fill="#fff" stroke="#c2cdd3" stroke-width=".6" filter="url(#psh)"/>
<rect x="5.3" y="4.5" width="14" height="14" rx="1.3" fill="none" stroke="#8c9ea7" stroke-width=".9"/><path d="M8.6 10.2 A3.9 3.9 0 0 1 15.6 9.2 M16 12.8 A3.9 3.9 0 0 1 9 13.8" fill="none" stroke="#8c9ea7" stroke-width=".9"/>
<path d="M26.7 5.8 L31.7 8.6 L26.7 11.4Z" fill="#7dc7a0"/>
<text x="36.30" y="8.70" font-size="7.1" fill="#262626">ConvertAvroToJSON</text>
<text x="36.30" y="15.30" font-size="6.0" fill="#728e9b">ConvertAvroToJSON 1.16.3</text>
<text x="36.30" y="21.30" font-size="5.3" fill="#728e9b">org.apache.nifi - nifi-avro-nar</text>
<rect x="0" y="23.90" width="168.96" height="9.12" fill="#f4f6f7"/><rect x="0" y="32.70" width="168.96" height=".5" fill="#c7d2d7"/>
<text x="5.30" y="30.40" font-size="5.9" fill="#262626" font-weight="700" class="slab" textLength="5.40" lengthAdjust="spacingAndGlyphs">In</text>
<text x="41.50" y="30.40" font-size="6.0" fill="#775351" font-weight="700" textLength="3.00" lengthAdjust="spacingAndGlyphs">0</text>
<text x="46.10" y="30.40" font-size="6.0" fill="#775351" textLength="22.80" lengthAdjust="spacingAndGlyphs">(0 bytes)</text>
<text x="146.60" y="30.40" font-size="5.8" fill="#728e9b" textLength="13.80" lengthAdjust="spacingAndGlyphs">5 min</text>
<rect x="0" y="33.05" width="168.96" height="9.12" fill="#ffffff"/><rect x="0" y="41.85" width="168.96" height=".5" fill="#c7d2d7"/>
<text x="5.30" y="39.55" font-size="5.9" fill="#262626" font-weight="700" class="slab" textLength="30.80" lengthAdjust="spacingAndGlyphs">Read/Write</text>
<text x="41.50" y="39.55" font-size="6.0" fill="#775351" font-weight="700" textLength="42.90" lengthAdjust="spacingAndGlyphs">0 bytes / 0 bytes</text>
<text x="146.60" y="39.55" font-size="5.8" fill="#728e9b" textLength="13.80" lengthAdjust="spacingAndGlyphs">5 min</text>
<rect x="0" y="42.20" width="168.96" height="9.12" fill="#f4f6f7"/><rect x="0" y="51.00" width="168.96" height=".5" fill="#c7d2d7"/>
<text x="5.30" y="48.70" font-size="5.9" fill="#262626" font-weight="700" class="slab" textLength="9.90" lengthAdjust="spacingAndGlyphs">Out</text>
<text x="41.50" y="48.70" font-size="6.0" fill="#775351" font-weight="700" textLength="3.00" lengthAdjust="spacingAndGlyphs">0</text>
<text x="46.10" y="48.70" font-size="6.0" fill="#775351" textLength="22.80" lengthAdjust="spacingAndGlyphs">(0 bytes)</text>
<text x="146.60" y="48.70" font-size="5.8" fill="#728e9b" textLength="13.80" lengthAdjust="spacingAndGlyphs">5 min</text>
<rect x="0" y="51.35" width="168.96" height="9.12" fill="#ffffff"/><rect x="0" y="60.15" width="168.96" height=".5" fill="#c7d2d7"/>
<text x="5.30" y="57.85" font-size="5.9" fill="#262626" font-weight="700" class="slab" textLength="32.00" lengthAdjust="spacingAndGlyphs">Tasks/Time</text>
<text x="41.50" y="57.85" font-size="6.0" fill="#775351" font-weight="700" textLength="43.10" lengthAdjust="spacingAndGlyphs">0 / 00:00:00.000</text>
<text x="146.60" y="57.85" font-size="5.8" fill="#728e9b" textLength="13.80" lengthAdjust="spacingAndGlyphs">5 min</text>
</g>
<g transform="translate(746.60,467.80)">
<rect x="0" y="0" width="168.96" height="61.44" fill="#fff" stroke="#c2cdd3" stroke-width=".6" filter="url(#psh)"/>
<rect x="5.3" y="4.5" width="14" height="14" rx="1.3" fill="none" stroke="#8c9ea7" stroke-width=".9"/><path d="M8.6 10.2 A3.9 3.9 0 0 1 15.6 9.2 M16 12.8 A3.9 3.9 0 0 1 9 13.8" fill="none" stroke="#8c9ea7" stroke-width=".9"/>
<path d="M26.7 5.8 L31.7 8.6 L26.7 11.4Z" fill="#7dc7a0"/>
<text x="36.30" y="8.70" font-size="7.1" fill="#262626" textLength="36.40" lengthAdjust="spacingAndGlyphs">LogAttribute</text>
<text x="36.30" y="15.30" font-size="6.0" fill="#728e9b" textLength="47.90" lengthAdjust="spacingAndGlyphs">LogAttribute 1.16.3</text>
<text x="36.30" y="21.30" font-size="5.3" fill="#728e9b" textLength="68.90" lengthAdjust="spacingAndGlyphs">org.apache.nifi - nifi-standard-nar</text>
<rect x="0" y="23.90" width="168.96" height="9.12" fill="#f4f6f7"/><rect x="0" y="32.70" width="168.96" height=".5" fill="#c7d2d7"/>
<text x="5.30" y="30.40" font-size="5.9" fill="#262626" font-weight="700" class="slab" textLength="5.40" lengthAdjust="spacingAndGlyphs">In</text>
<text x="41.50" y="30.40" font-size="6.0" fill="#775351" font-weight="700" textLength="3.00" lengthAdjust="spacingAndGlyphs">0</text>
<text x="46.10" y="30.40" font-size="6.0" fill="#775351" textLength="22.80" lengthAdjust="spacingAndGlyphs">(0 bytes)</text>
<text x="146.60" y="30.40" font-size="5.8" fill="#728e9b" textLength="13.80" lengthAdjust="spacingAndGlyphs">5 min</text>
<rect x="0" y="33.05" width="168.96" height="9.12" fill="#ffffff"/><rect x="0" y="41.85" width="168.96" height=".5" fill="#c7d2d7"/>
<text x="5.30" y="39.55" font-size="5.9" fill="#262626" font-weight="700" class="slab" textLength="30.80" lengthAdjust="spacingAndGlyphs">Read/Write</text>
<text x="41.50" y="39.55" font-size="6.0" fill="#775351" font-weight="700" textLength="42.90" lengthAdjust="spacingAndGlyphs">0 bytes / 0 bytes</text>
<text x="146.60" y="39.55" font-size="5.8" fill="#728e9b" textLength="13.80" lengthAdjust="spacingAndGlyphs">5 min</text>
<rect x="0" y="42.20" width="168.96" height="9.12" fill="#f4f6f7"/><rect x="0" y="51.00" width="168.96" height=".5" fill="#c7d2d7"/>
<text x="5.30" y="48.70" font-size="5.9" fill="#262626" font-weight="700" class="slab" textLength="9.90" lengthAdjust="spacingAndGlyphs">Out</text>
<text x="41.50" y="48.70" font-size="6.0" fill="#775351" font-weight="700" textLength="3.00" lengthAdjust="spacingAndGlyphs">0</text>
<text x="46.10" y="48.70" font-size="6.0" fill="#775351" textLength="22.80" lengthAdjust="spacingAndGlyphs">(0 bytes)</text>
<text x="146.60" y="48.70" font-size="5.8" fill="#728e9b" textLength="13.80" lengthAdjust="spacingAndGlyphs">5 min</text>
<rect x="0" y="51.35" width="168.96" height="9.12" fill="#ffffff"/><rect x="0" y="60.15" width="168.96" height=".5" fill="#c7d2d7"/>
<text x="5.30" y="57.85" font-size="5.9" fill="#262626" font-weight="700" class="slab" textLength="32.00" lengthAdjust="spacingAndGlyphs">Tasks/Time</text>
<text x="41.50" y="57.85" font-size="6.0" fill="#775351" font-weight="700" textLength="43.10" lengthAdjust="spacingAndGlyphs">0 / 00:00:00.000</text>
<text x="146.60" y="57.85" font-size="5.8" fill="#728e9b" textLength="13.80" lengthAdjust="spacingAndGlyphs">5 min</text>
</g>
</svg>
<div id="navigate" class="panel"></div>
<div id="operate" class="panel"></div>
<div id="footer"></div>
<svg id="ui-svg" width="999" height="570" viewBox="0 0 999 570">
<text y="98.8" font-size="37" font-weight="700" stroke-width=".5"><tspan x="9.9" textLength="17.4" lengthAdjust="spacingAndGlyphs" fill="#728e9b" stroke="#728e9b">n</tspan><tspan x="28" textLength="8.85" lengthAdjust="spacingAndGlyphs" fill="#728e9b" stroke="#728e9b">i</tspan><tspan x="36.5" textLength="10.6" lengthAdjust="spacingAndGlyphs" fill="#e3e8eb" stroke="#e3e8eb">f</tspan><tspan x="48.5" textLength="8.85" lengthAdjust="spacingAndGlyphs" fill="#e3e8eb" stroke="#e3e8eb">i</tspan></text>
<path d="M68.6 71.9 C 72.4 79 78.8 83.6 78.8 90 A9.9 9.4 0 0 1 59 90 C 59 83.6 65 79 68.6 71.9Z" fill="#728e9b"/><path d="M66.9 75.4 C 63.4 81.4 60.4 84.6 60.4 89.4 C 60.4 92.4 61.6 94.8 63.4 96.3 C 59.6 90.2 62.6 83.4 66.9 75.4Z" fill="#cfd9de"/><path d="M72.7 89.2 H79.4 V96 H76.2 V99.4 H69.5 V92.4 H72.7Z" fill="#aabbc3"/><g fill="#6c8997"><rect x="73.2" y="89.7" width="2.6" height="2.6"/><rect x="76.4" y="89.7" width="2.6" height="2.6"/><rect x="70" y="92.9" width="2.6" height="2.6"/><rect x="73.2" y="92.9" width="2.6" height="2.6"/><rect x="76.4" y="92.9" width="2.6" height="2.6"/><rect x="70" y="96.1" width="2.6" height="2.6"/><rect x="73.2" y="96.1" width="2.6" height="2.6"/></g>
<g fill="none" stroke="#004849" stroke-width="1.5" stroke-linejoin="round"><path d="M106.2 96.2 V76.2 A1.8 1.8 0 0 1 108 74.6 H126 A1.8 1.8 0 0 1 127.8 76.2 V96.2"/><path d="M105.6 96.6 H128.4" stroke-dasharray="2.1 1.1" stroke-width="1.7"/><path d="M110.94 86.69 A6.2 6.2 0 0 1 121.89 81.58" stroke-width="1.9"/><path d="M123.06 84.11 A6.2 6.2 0 0 1 112.11 89.22" stroke-width="1.9"/></g>
<g fill="none" stroke="#004849" stroke-width="1.5" stroke-linejoin="round"><path d="M156.2 80.4 V76.4 H175.4 V95.4 H161.4"/><path d="M151.4 84.7 H158.2 V79.8 L165.6 87.7 L158.2 95.6 V90.7 H151.4Z"/><path d="M170 85.4 V91.2" stroke-width="1.2"/></g>
<g fill="none" stroke="#004849" stroke-width="1.5" stroke-linejoin="round"><path d="M216 80 V76.4 H198.5 V95.4 H214.4"/><path d="M208 84.7 H214.8 V79.8 L222.2 87.7 L214.8 95.6 V90.7 H208Z"/><ellipse cx="203.6" cy="88" rx="1.9" ry="2.6" stroke-width="1.2"/></g>
<g fill="none" stroke="#004849" stroke-width="1.5" stroke-linejoin="round"><path d="M250.70000000000002 77 H263.8 M250.70000000000002 96.1 H263.8 M247.3 80.4 V92.69999999999999 M267.2 80.4 V92.69999999999999" stroke-width="1.6"/><rect x="245.80" y="75.50" width="3" height="3" rx=".5" stroke-width="1.1"/><rect x="265.70" y="75.50" width="3" height="3" rx=".5" stroke-width="1.1"/><rect x="245.80" y="94.60" width="3" height="3" rx=".5" stroke-width="1.1"/><rect x="265.70" y="94.60" width="3" height="3" rx=".5" stroke-width="1.1"/><rect x="251.2" y="80.8" width="8.2" height="7.4" rx="1.8" stroke-width="1.1"/><rect x="255.6" y="84.6" width="8.2" height="7.6" rx="1.8" stroke-width="1.1" fill="#aabbc3"/></g>
<g fill="none" stroke="#004849" stroke-width="1.5" stroke-linejoin="round"><path d="M297.4 77 H310.6 M297.4 96.1 H310.6 M294 80.4 V92.69999999999999 M314 80.4 V92.69999999999999" stroke-width="1.6"/><rect x="292.50" y="75.50" width="3" height="3" rx=".5" stroke-width="1.1"/><rect x="312.50" y="75.50" width="3" height="3" rx=".5" stroke-width="1.1"/><rect x="292.50" y="94.60" width="3" height="3" rx=".5" stroke-width="1.1"/><rect x="312.50" y="94.60" width="3" height="3" rx=".5" stroke-width="1.1"/><path d="M299.6 90.4 H309 A2.4 2.4 0 0 0 309.2 85.6 A3.3 3.3 0 0 0 303 84.6 A2.1 2.1 0 0 0 300 86.2 A2.2 2.2 0 0 0 299.6 90.4Z" stroke-width="1.1"/></g>
<g fill="none" stroke="#004849" stroke-width="1.5" stroke-linejoin="round" stroke-width="1"><g stroke-width=".75"><rect x="338.8" y="76.3" width="4" height="4.8" rx="1.3"/><rect x="345.1" y="74.3" width="4" height="4.8" rx="1.3"/><rect x="351.8" y="74.3" width="4.2" height="4.8" rx="1.3"/><rect x="358.4" y="76.3" width="4" height="4.8" rx="1.3"/></g><path d="M340.8 81.1 C341 83.4 346 82.8 347.4 84.6 M347.1 79.1 V84.2 M353.9 79.1 V84.2 M360.4 81.1 C360.2 83.4 355.2 82.8 353.8 84.6"/><path d="M345.8 84.9 H355.4" stroke-width="1.7"/><path d="M348.9 86 H352.9 V90.4 H355.4 L350.9 94.6 L346.4 90.4 H348.9Z" fill="#004849" stroke-width=".6"/><path d="M348 94.4 V98.3 H353.7 V94.4" stroke-width="1.1"/></g>
<g fill="#004849"><rect x="385.5" y="74.2" width="12" height="4.9" rx=".6"/><rect x="397.8" y="84" width="12" height="5" rx=".6"/><rect x="391" y="93.5" width="12" height="5" rx=".6"/></g><path d="M392.6 78.6 L401.8 84.6 M402.4 88.6 L397.4 94" stroke="#004849" stroke-width=".9" fill="none"/>
<g stroke="#004849" fill="none"><path d="M432.3 75.8 H446 M432.3 79.3 H448.6 M432.3 82.8 H447 M432.3 86.1 H441.6" stroke-width="1.6"/><path d="M457.2 77.2 L445 93 L443 97.6 L447.6 95.8 L457.2 84.4" stroke-width="1.15" stroke-linejoin="round"/><path d="M457.2 80.8 L448.8 91.2 M457.2 88 L451.4 95" stroke-width="1"/></g><path d="M444.6 94.4 L443.2 97.4 L446.2 96.2Z" fill="#004849"/>
<text x="909.90" y="82.90" font-size="9.2" fill="#262626" class="slab" textLength="40.40" lengthAdjust="spacingAndGlyphs" stroke="#262626" stroke-width=".15">abhishek</text>
<text x="913.40" y="98.50" font-size="8.7" fill="#004849" textLength="36.60" lengthAdjust="spacingAndGlyphs">LOG OUT</text>
<rect x="913" y="99.9" width="37.6" height=".7" fill="#e3e8eb" opacity=".7"/>
<g fill="#004849"><rect x="964" y="78" width="21.6" height="3.1" rx="1.2"/><rect x="964" y="85" width="21.6" height="3.1" rx="1.2"/><rect x="964" y="92.2" width="21.6" height="3.1" rx="1.2"/></g>
<g fill="none" stroke="#728e9b" stroke-width=".8"><circle cx="16.3" cy="116.6" r="1.15"/><circle cx="16.3" cy="120.0" r="1.15"/><circle cx="16.3" cy="123.39999999999999" r="1.15"/><circle cx="19.7" cy="116.6" r="1.15"/><circle cx="19.7" cy="120.0" r="1.15"/><circle cx="19.7" cy="123.39999999999999" r="1.15"/><circle cx="23.1" cy="116.6" r="1.15"/><circle cx="23.1" cy="120.0" r="1.15"/><circle cx="23.1" cy="123.39999999999999" r="1.15"/></g>
<text x="35.00" y="124.70" font-size="11.2" fill="#775351" font-weight="700" textLength="6.00" lengthAdjust="spacingAndGlyphs">0</text>
<g stroke="#728e9b" stroke-width="1.1"><path d="M72.6 117.2 H81.4 M72.6 120.2 H81.4 M72.6 123.2 H81.4"/><path d="M69.8 117.2 H71.2 M69.8 120.2 H71.2 M69.8 123.2 H71.2"/></g>
<text x="89.00" y="124.70" font-size="11.2" fill="#775351" font-weight="700" textLength="53.00" lengthAdjust="spacingAndGlyphs">0 / 0 bytes</text>
<g fill="none" stroke="#728e9b" stroke-width=".9"><circle cx="175.6" cy="120.6" r="4.1"/><circle cx="175.6" cy="120.6" r="1.9"/></g>
<text x="188.00" y="124.70" font-size="11.2" fill="#775351" font-weight="700" textLength="6.00" lengthAdjust="spacingAndGlyphs">0</text>
<text x="794.00" y="124.70" font-size="11.2" fill="#775351" font-weight="700" textLength="42.60" lengthAdjust="spacingAndGlyphs">2:42 IST</text>
<g fill="none" stroke="#004849" stroke-width="1.7"><circle cx="961.9" cy="119.5" r="3.6"/><path d="M964.6 122.3 L967.6 125.4" stroke-linecap="round" stroke-width="1.9"/></g>
<path d="M983.6 116 H990.8 A.9 .9 0 0 1 991.7 116.9 V122.6 L989 125.3 H983.6 A.9 .9 0 0 1 982.7 124.4 V116.9 A.9 .9 0 0 1 983.6 116Z" fill="none" stroke="#d3dde2" stroke-width="1.1" stroke-linejoin="round"/><path d="M988.9 125 V122.6 H991.4" fill="none" stroke="#d3dde2" stroke-width=".9"/>
<circle cx="11.6" cy="164.3" r="5.2" fill="none" stroke="#004849" stroke-width="1.7"/><path d="M14 161.9 L12.7 165.4 L9.2 166.7 L10.5 163.2Z" fill="#004849"/><circle cx="11.6" cy="164.3" r=".7" fill="#e3e8eb"/>
<text x="25.10" y="166.70" font-size="9.3" fill="#262626" class="slab" textLength="43.20" lengthAdjust="spacingAndGlyphs" stroke="#262626" stroke-width=".15">Navigate</text>
<rect x="7.9" y="183.7" width="20.8" height="20.5" rx="1.4" fill="#f9fafb" stroke="#cfd8dc" stroke-width=".7"/><rect x="31.1" y="183.7" width="20.8" height="20.5" rx="1.4" fill="#f9fafb" stroke="#cfd8dc" stroke-width=".7"/><rect x="61.5" y="183.7" width="20.8" height="20.5" rx="1.4" fill="#f9fafb" stroke="#cfd8dc" stroke-width=".7"/><rect x="84.9" y="183.7" width="20.8" height="20.5" rx="1.4" fill="#f9fafb" stroke="#cfd8dc" stroke-width=".7"/>
<g fill="none" stroke="#004849" stroke-width="1.7"><circle cx="16.5" cy="193.7" r="4.1"/><path d="M19.7 197 L23.3 200.6" stroke-linecap="round" stroke-width="1.9"/><path d="M14.4 193.7 H18.6 M16.5 191.6 V195.8" stroke-width="1.2"/></g>
<g fill="none" stroke="#004849" stroke-width="1.7"><circle cx="39.7" cy="193.7" r="4.1"/><path d="M42.9 197 L46.5 200.6" stroke-linecap="round" stroke-width="1.9"/><path d="M37.6 193.7 H41.8" stroke-width="1.2"/></g>
<g fill="#004849"><path d="M64.2 186.9 H69.4 L64.2 192.1Z M78 186.9 H72.8 L78 192.1Z M64.2 200.2 H69.4 L64.2 195Z M78 200.2 H72.8 L78 195Z"/></g>
<g fill="#004849"><rect x="87.3" y="187.2" width="1.8" height="13.2"/><rect x="98.4" y="187.2" width="1.8" height="13.2"/><rect x="92.6" y="191.2" width="2.1" height="2.2"/><rect x="92.6" y="195.3" width="2.1" height="2.3"/></g>
<rect x="8" y="209" width="192" height="116" fill="#fff" fill-opacity=".25" stroke="#d6dde1" stroke-width=".5" stroke-opacity=".7"/>
<rect x="71.5" y="209" width="28.3" height="10" fill="#dde4e8"/><rect x="70.8" y="227.8" width="28.3" height="10.2" fill="#dde4e8"/><rect x="23.8" y="242.3" width="28.3" height="9.8" fill="#dde4e8"/><rect x="113.8" y="242.3" width="28.3" height="9.8" fill="#dde4e8"/><rect x="23.8" y="260" width="28.3" height="10" fill="#dde4e8"/><rect x="70.8" y="260" width="28.3" height="10" fill="#dde4e8"/><rect x="115" y="268" width="28.5" height="10" fill="#dde4e8"/><rect x="23.8" y="281.3" width="28.3" height="10.1" fill="#dde4e8"/><rect x="24.8" y="302.5" width="28.3" height="10" fill="#dde4e8"/><rect x="132.4" y="296.8" width="28.5" height="10.1" fill="#dde4e8"/><rect x="70.8" y="282.3" width="28.3" height="10.1" fill="#b01218" stroke="#960c12" stroke-width=".5"/><rect x="70" y="303.2" width="28.3" height="10.4" fill="#2a6ccf"/>
<rect x="8.6" y="240.6" width="166.4" height="73.2" fill="none" stroke="#5a8aa6" stroke-width="1.3"/>
<rect x="203.4" y="158.6" width="9" height="9" rx="1.2" fill="none" stroke="#004849" stroke-width=".8" opacity=".6"/><rect x="203.4" y="344.4" width="9" height="9" rx="1.2" fill="none" stroke="#004849" stroke-width=".8" opacity=".6"/>
<g transform="translate(0.2,0.8)"><path d="M9.4 343.6 V350 L7.2 348.4 C6.2 347.8 5.2 348.8 6 349.8 L9.6 354.4 H16 C17.4 352.4 17.6 350.6 17.4 347.6 C17.3 346.6 15.8 346.6 15.7 347.6 V346.8 C15.6 345.8 14.1 345.8 14 346.8 V346.2 C13.9 345.2 12.4 345.2 12.3 346.2 V343.6 C12.2 342.4 9.5 342.4 9.4 343.6Z" fill="none" stroke="#004849" stroke-width=".9" stroke-linejoin="round"/><path d="M9.6 355.6 H16.2" stroke="#004849" stroke-width="1.4"/></g>
<text x="25.10" y="351.80" font-size="9.3" fill="#262626" class="slab" textLength="37.90" lengthAdjust="spacingAndGlyphs" stroke="#262626" stroke-width=".15">Operate</text>
<text x="11.20" y="562.40" font-size="9.8" fill="#004849" font-weight="700" textLength="41.40" lengthAdjust="spacingAndGlyphs">NiFi Flow</text>
</svg>

<div id="glass"></div>
<div id="dialog">
<div id="dlg-header"></div>
<div id="dlg-status"></div>
<div id="tabline"></div>
<div class="tab" style="left:15.1px;width:68.9px"></div>
<div class="tab" style="left:86.3px;width:80.4px"></div>
<div class="tab sel" style="left:168.3px;width:78.3px"></div>
<div class="tab" style="left:248.2px;width:90.9px"></div>
<div class="tab" style="left:341.2px;width:75.8px"></div>
<div id="thead"></div>
<div class="row selrow" style="top:162.40px"><i class="c1"></i><i class="c2"></i></div>
<div class="row odd" style="top:180.86px"><i class="c1"></i><i class="c2"></i></div>
<div class="row" style="top:199.32px"><i class="c1"></i><i class="c2"></i></div>
<div class="row odd" style="top:217.78px"><i class="c1"></i><i class="c2"></i></div>
<div class="row" style="top:236.24px"><i class="c1"></i><i class="c2"></i></div>
<div class="row odd" style="top:254.70px"><i class="c1"></i><i class="c2"></i></div>
<div id="btn-adv"></div>
<div id="btn-ok"></div>
</div>
<svg id="dlg-svg" width="999" height="570" viewBox="0 0 999 570">
<text x="222.90" y="129.60" font-size="14.3" fill="#fff" class="slab" textLength="113.50" lengthAdjust="spacingAndGlyphs" stroke="#fff" stroke-width=".8" stroke-linejoin="round">Processor Details</text>
<path d="M218.8 152.6 L226.9 157.1 L218.8 161.6Z" fill="#7dc7a0"/>
<text x="230.40" y="161.70" font-size="10.3" fill="#775351" font-weight="700" textLength="34.10" lengthAdjust="spacingAndGlyphs" stroke="#775351" stroke-width=".25">Running</text>
<path d="M694.1 153.1 H703 L706.9 158 L703 162.8 H694.1Z" fill="#004849"/><g transform="translate(701.9,158.2)"><circle r="4.75" fill="#004849"/><circle r="3.1" fill="#e8edef"/><rect x="-.9" y="-4.2" width="1.8" height="8.4" fill="#e8edef" transform="rotate(0)"/><rect x="-.9" y="-4.2" width="1.8" height="8.4" fill="#e8edef" transform="rotate(45)"/><rect x="-.9" y="-4.2" width="1.8" height="8.4" fill="#e8edef" transform="rotate(90)"/><rect x="-.9" y="-4.2" width="1.8" height="8.4" fill="#e8edef" transform="rotate(135)"/><circle r="1.75" fill="#004849"/></g>
<text x="708.80" y="162.20" font-size="8.6" fill="#004849" font-weight="700" textLength="76.70" lengthAdjust="spacingAndGlyphs">STOP &amp; CONFIGURE</text>
<text x="239.60" y="199.40" font-size="9.0" fill="#0d5152" font-weight="700" textLength="35.90" lengthAdjust="spacingAndGlyphs">SETTINGS</text>
<text x="310.80" y="199.40" font-size="9.0" fill="#0d5152" font-weight="700" textLength="46.70" lengthAdjust="spacingAndGlyphs">SCHEDULING</text>
<text x="392.80" y="199.40" font-size="9.0" fill="#0d5152" font-weight="700" textLength="44.40" lengthAdjust="spacingAndGlyphs">PROPERTIES</text>
<text x="472.80" y="199.40" font-size="9.0" fill="#0d5152" font-weight="700" textLength="57.20" lengthAdjust="spacingAndGlyphs">RELATIONSHIPS</text>
<text x="565.80" y="199.40" font-size="9.0" fill="#0d5152" font-weight="700" textLength="42.20" lengthAdjust="spacingAndGlyphs">COMMENTS</text>
<text x="227.00" y="230.00" font-size="10.1" fill="#262626" font-weight="700" textLength="58.00" lengthAdjust="spacingAndGlyphs">Required field</text>
<text x="225.80" y="256.10" font-size="10.4" fill="#fff" font-weight="700" textLength="35.60" lengthAdjust="spacingAndGlyphs">Property</text>
<text x="471.80" y="256.10" font-size="10.4" fill="#fff" font-weight="700" textLength="23.20" lengthAdjust="spacingAndGlyphs">Value</text>
<text x="230.50" y="277.70" font-size="10.2" fill="#262626" textLength="115.70" lengthAdjust="spacingAndGlyphs">Delete Attributes Expression</text>
<circle cx="458.6" cy="274.20" r="3.9" fill="#004849"/><text x="458.60" y="276.90" font-size="7.6" fill="#ffef85" font-weight="700" text-anchor="middle">?</text>
<text x="477.40" y="277.70" font-size="10.2" fill="#b2b2b2" textLength="50.40" lengthAdjust="spacingAndGlyphs">No value set</text>
<text x="230.50" y="296.16" font-size="10.2" fill="#262626" font-weight="700" textLength="45.80" lengthAdjust="spacingAndGlyphs">Store State</text>
<circle cx="458.6" cy="292.66" r="3.9" fill="#004849"/><text x="458.60" y="295.36" font-size="7.6" fill="#f4f6f7" font-weight="700" text-anchor="middle">?</text>
<text x="477.40" y="296.16" font-size="10.2" fill="#262626" font-weight="700" textLength="73.50" lengthAdjust="spacingAndGlyphs">Do not store state</text>
<text x="230.50" y="314.62" font-size="10.2" fill="#262626" textLength="121.80" lengthAdjust="spacingAndGlyphs">Stateful Variables Initial Value</text>
<circle cx="458.6" cy="311.12" r="3.9" fill="#004849"/><text x="458.60" y="313.82" font-size="7.6" fill="#ffffff" font-weight="700" text-anchor="middle">?</text>
<text x="477.40" y="314.62" font-size="10.2" fill="#b2b2b2" textLength="50.40" lengthAdjust="spacingAndGlyphs">No value set</text>
<text x="230.50" y="333.08" font-size="10.2" fill="#262626" font-weight="700" textLength="132.50" lengthAdjust="spacingAndGlyphs">Cache Value Lookup Cache Size</text>
<circle cx="458.6" cy="329.58" r="3.9" fill="#004849"/><text x="458.60" y="332.28" font-size="7.6" fill="#f4f6f7" font-weight="700" text-anchor="middle">?</text>
<text x="477.40" y="333.08" font-size="10.2" fill="#262626" font-weight="700" textLength="15.70" lengthAdjust="spacingAndGlyphs">100</text>
<text x="230.50" y="351.54" font-size="10.2" fill="#262626" textLength="57.80" lengthAdjust="spacingAndGlyphs">schema.name</text>
<circle cx="458.6" cy="348.04" r="3.9" fill="#004849"/><text x="458.60" y="350.74" font-size="7.6" fill="#ffffff" font-weight="700" text-anchor="middle">?</text>
<text x="477.40" y="351.54" font-size="10.2" fill="#262626" textLength="22.70" lengthAdjust="spacingAndGlyphs">query</text>
<text x="230.50" y="370.00" font-size="10.2" fill="#262626" textLength="61.40" lengthAdjust="spacingAndGlyphs">statement.type</text>
<circle cx="458.6" cy="366.50" r="3.9" fill="#004849"/><text x="458.60" y="369.20" font-size="7.6" fill="#f4f6f7" font-weight="700" text-anchor="middle">?</text>
<text x="477.40" y="370.00" font-size="10.2" fill="#262626" textLength="16.40" lengthAdjust="spacingAndGlyphs">SQL</text>
<g transform="translate(239.4,521)"><circle r="4.1" fill="#004849"/><rect x="-1.15" y="-5.6" width="2.3" height="11.2" fill="#004849" transform="rotate(0)"/><rect x="-1.15" y="-5.6" width="2.3" height="11.2" fill="#004849" transform="rotate(45)"/><rect x="-1.15" y="-5.6" width="2.3" height="11.2" fill="#004849" transform="rotate(90)"/><rect x="-1.15" y="-5.6" width="2.3" height="11.2" fill="#004849" transform="rotate(135)"/><circle r="1.8" fill="#e3e8eb"/></g>
<text x="249.60" y="526.00" font-size="8.6" fill="#004849" font-weight="700" textLength="43.40" lengthAdjust="spacingAndGlyphs">ADVANCED</text>
<text x="745.60" y="524.20" font-size="8.7" fill="#fff" font-weight="700" textLength="10.90" lengthAdjust="spacingAndGlyphs">OK</text>
</svg>

</div>
</div>
</body></html>
